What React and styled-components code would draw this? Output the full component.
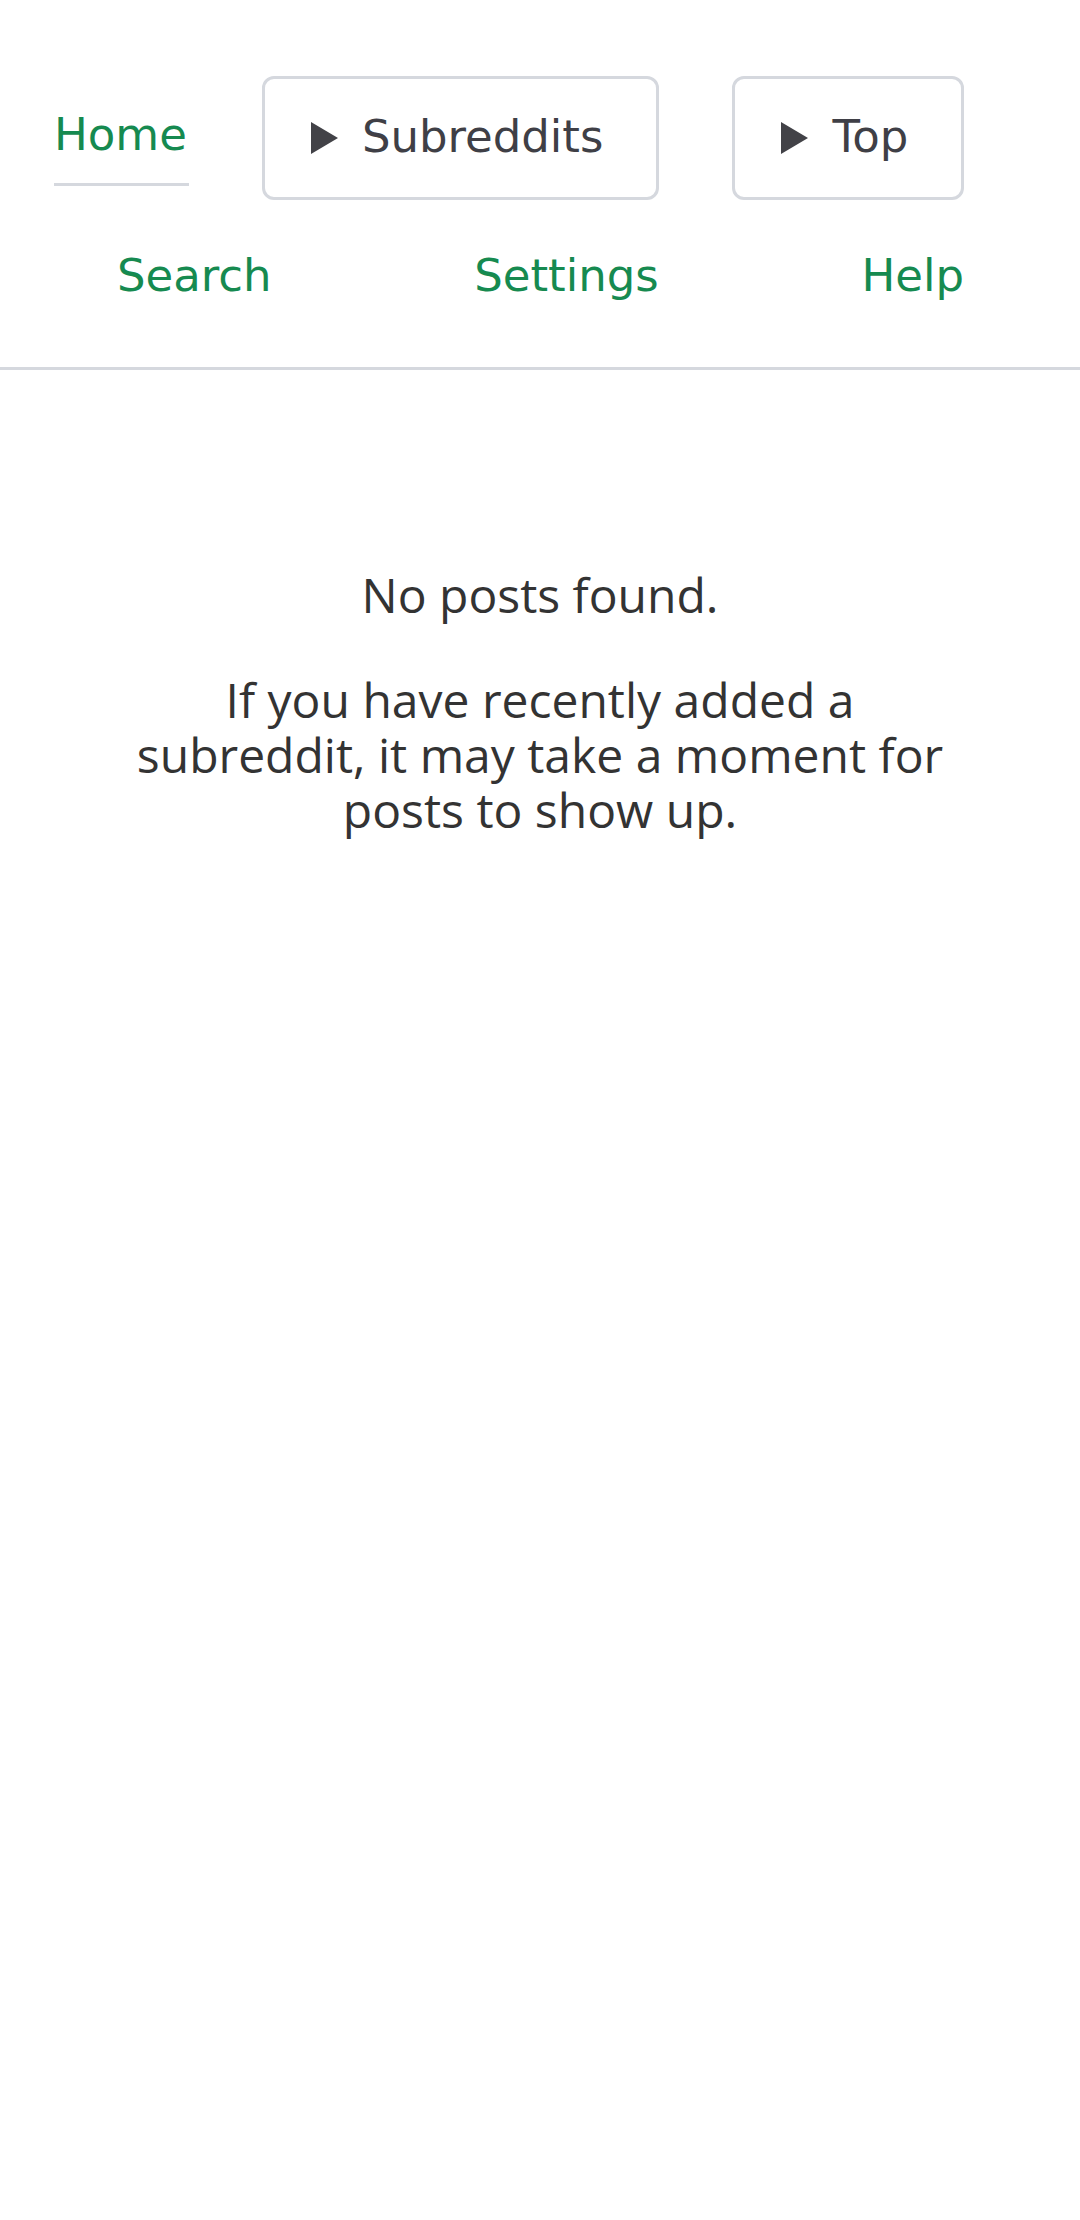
import React from "react";
import styled, { createGlobalStyle } from "styled-components";

const Global = createGlobalStyle`
  html, body { margin: 0; padding: 0; background: #ffffff; }
  body { font-family: "Open Sans", "Noto Sans", sans-serif; }
  * { box-sizing: border-box; }
`;

const Page = styled.div`
  min-height: 2220px;
  background: #ffffff;
`;

const Header = styled.header`
  padding: 76px 0 57px;
  border-bottom: 3px solid #d5d8de;
  font-family: "DejaVu Sans", "Noto Sans", sans-serif;
  font-size: 45px;
  line-height: 68px;
`;

const TopRow = styled.div`
  display: flex;
  align-items: flex-start;
  gap: 73px;
  padding-left: 54px;
`;

const NavLink = styled.a`
  color: #168a50;
  text-decoration: none;
  display: block;
  white-space: nowrap;
  ${(p) =>
    p.$active &&
    `
    margin-top: 25px;
    padding: 0 2px 14px 0;
    border-bottom: 3px solid #d5d8de;
  `}
`;

const Dropdown = styled.button`
  display: flex;
  align-items: center;
  gap: 24px;
  padding: 24px 53px 26px 46px;
  border: 3px solid #d5d8de;
  border-radius: 12px;
  background: #ffffff;
  color: #3f3f46;
  font: inherit;
  cursor: pointer;
`;

const Caret = styled.svg`
  width: 27px;
  height: 32px;
  flex: none;
  margin-top: 2px;
`;

const BottomRow = styled.nav`
  display: flex;
  justify-content: space-between;
  margin-top: 42px;
  padding: 0 116px 0 117px;
`;

const Main = styled.main`
  display: flex;
  flex-direction: column;
  align-items: center;
  padding-top: 197px;
  color: #333333;
  font-size: 48px;
  line-height: 55px;
  text-align: center;
`;

const Message = styled.p`
  margin: 0;
  max-width: 840px;
  & + & {
    margin-top: 50px;
  }
`;

function Triangle() {
  return (
    <Caret viewBox="0 0 27 32" aria-hidden="true">
      <path d="M0 0 L27 16 L0 32 Z" fill="#424247" />
    </Caret>
  );
}

export default function App() {
  return (
    <Page>
      <Global />
      <Header>
        <TopRow>
          <NavLink href="#" $active>Home</NavLink>
          <Dropdown type="button">
            <Triangle />
            <span>Subreddits</span>
          </Dropdown>
          <Dropdown type="button">
            <Triangle />
            <span>Top</span>
          </Dropdown>
        </TopRow>
        <BottomRow>
          <NavLink href="#">Search</NavLink>
          <NavLink href="#">Settings</NavLink>
          <NavLink href="#">Help</NavLink>
        </BottomRow>
      </Header>
      <Main>
        <Message>No posts found.</Message>
        <Message>
          If you have recently added a subreddit, it may take a moment for posts to show up.
        </Message>
      </Main>
    </Page>
  );
}
